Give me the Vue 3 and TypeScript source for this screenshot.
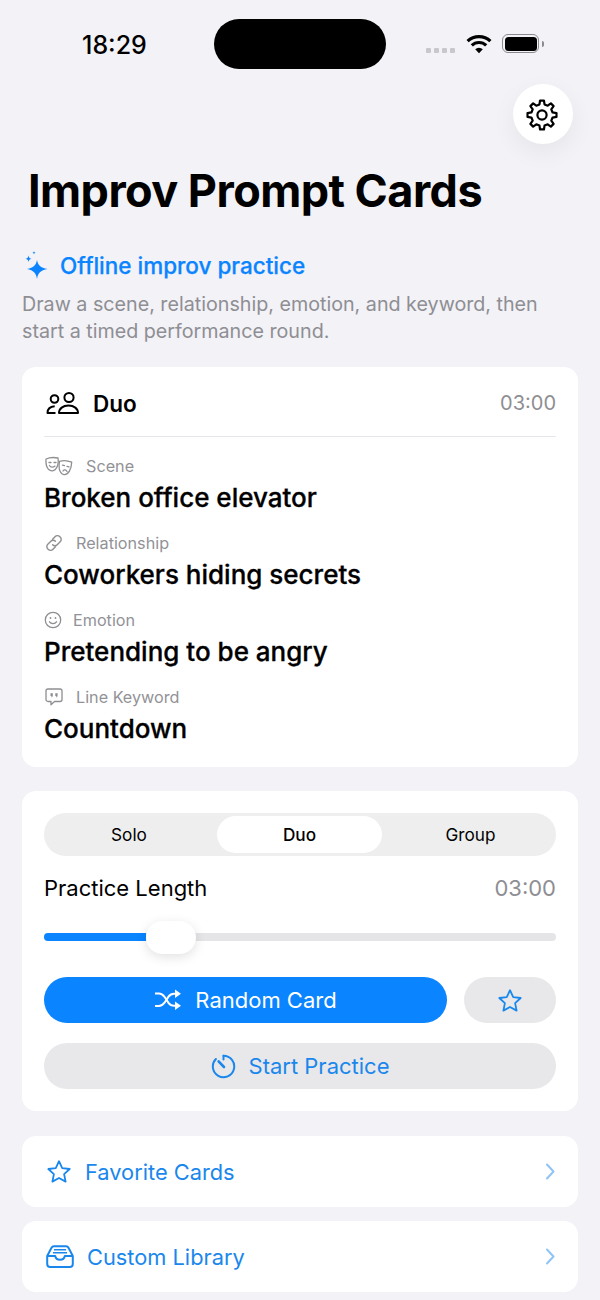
<script setup lang="ts">
// 8-tooth gear outline for the settings button
function gearPath(cx: number, cy: number, outer: number, inner: number, teeth: number): string {
  const pts: string[] = []
  const step = (Math.PI * 2) / teeth
  for (let i = 0; i < teeth; i++) {
    const a = i * step - Math.PI / 2
    const list: [number, number][] = [
      [a - step * 0.3, inner],
      [a - step * 0.17, outer],
      [a + step * 0.17, outer],
      [a + step * 0.3, inner],
    ]
    for (const [ang, r] of list) {
      pts.push(`${(cx + Math.cos(ang) * r).toFixed(2)} ${(cy + Math.sin(ang) * r).toFixed(2)}`)
    }
  }
  return 'M' + pts.join('L') + 'Z'
}

const gear = gearPath(16, 16, 14.6, 10.9, 8)
const star = 'M13 2.2l3.2 6.9 7.5.9-5.6 5.1 1.5 7.5L13 19l-6.6 3.6 1.5-7.5L2.3 10l7.5-.9z'
const modes = ['Solo', 'Duo', 'Group']
</script>

<template>
  <div class="page">
    <div class="status">
      <span class="time">18:29</span>
      <div class="island"></div>
      <div class="status-icons">
        <div class="dots"><i></i><i></i><i></i><i></i></div>
        <svg class="wifi" width="26" height="20" viewBox="0 0 26 20" fill="none" stroke="#000" stroke-width="3.2">
          <path d="M1.6 7.2a16.4 16.4 0 0 1 22.8 0" />
          <path d="M5.8 11.4a10.4 10.4 0 0 1 14.4 0" />
          <path d="M13 19.2l-3.8-3.9a5.4 5.4 0 0 1 7.6 0z" fill="#000" stroke="none" />
        </svg>
        <div class="battery"><div class="battery-fill"></div></div>
        <div class="battery-cap"></div>
      </div>
    </div>

    <div class="gear-row">
      <div class="gear-btn">
        <svg class="gear-icon" width="32" height="32" viewBox="0 0 32 32" fill="none" stroke="#000" stroke-width="2.2" stroke-linejoin="round">
          <path :d="gear" />
          <circle cx="16" cy="16" r="4.6" />
        </svg>
      </div>
    </div>

    <h1 class="title">Improv Prompt Cards</h1>

    <div class="tagline">
      <svg width="24" height="29" viewBox="0 0 24 29" fill="#0a84ff">
        <path d="M13 9c1 5.200 3.400 7.600 10.500 9-7.100 1.400-9.500 3.800-10.500 10-1-6.200-3.400-8.600-10-10 6.600-1.400 9-3.800 10-9z" />
        <path d="M4.500 4.500c.4 2.200 1 2.800 3 3.300-2 .5-2.600 1.100-3 3.200-.4-2.100-1-2.700-3-3.200 2-.5 2.600-1.100 3-3.300z" />
        <path d="M10 0c.2 1.100.5 1.400 1.600 1.700-1.100.3-1.400.6-1.600 1.700-.2-1.100-.5-1.400-1.600-1.700C9.500 1.400 9.800 1.100 10 0z" />
      </svg>
      <span>Offline improv practice</span>
    </div>
    <p class="desc">Draw a scene, relationship, emotion, and keyword, then start a timed performance round.</p>

    <section class="card prompt-card">
      <header class="prompt-head">
        <div class="prompt-mode">
          <svg width="33" height="24" viewBox="0 0 33 24" fill="none" stroke="#000" stroke-width="2" stroke-linejoin="round">
            <circle cx="8.500" cy="8" r="3.800" />
            <circle cx="23" cy="6.500" r="4.600" />
            <path d="M9.500 22H1.500c0-3.800 2.800-6.400 7.200-6.700" />
            <path d="M13 22c0-4.400 4-7.500 9.500-7.500S32 17.600 32 22z" />
          </svg>
          <span>Duo</span>
        </div>
        <span class="prompt-time">03:00</span>
      </header>

      <div class="prompt-list">
        <div class="prompt">
          <div class="label">
            <svg width="28" height="20" viewBox="0 0 28 20" fill="none" stroke="#8e8e93" stroke-width="1.300" stroke-linejoin="round" stroke-linecap="round">
              <path d="M1 3c3.500-1.600 8-1.800 12-1 .4 3 .2 6-.6 8-1 2.600-3.200 4.600-5 4.800C5 15 2.500 12.800 1.500 9.800 1 8 .9 5 1 3z" />
              <path d="M14.500 5.400c3.600-1.200 8.200-.8 12.200.8-.1 3-.9 6.600-2.300 9-1.300 2.200-3.600 3.700-5.500 3.400-2.200-.4-4-2.800-4.600-5.700-.3-2-.3-5.400.2-7.500z" fill="#fff" />
              <path d="M4 6.500h2M9 6.500h2M4.500 9.500c1.200 2 3.500 2.200 5.500.6" />
              <path d="M17.500 9.200l2 .5M22 10.400l2 .5M18 15c1-1.600 3-1.300 4 .5" />
            </svg>
            <span>Scene</span>
          </div>
          <div class="value">Broken office elevator</div>
        </div>
        <div class="prompt">
          <div class="label">
            <svg width="18" height="18" viewBox="0 0 18 18" fill="none" stroke="#8e8e93" stroke-width="1.400" stroke-linecap="round">
              <path d="M7.600 5.200l2.400-2.500a3.200 3.200 0 0 1 4.800 0l.4.400a3.200 3.200 0 0 1 0 4.600l-3 3a3.200 3.200 0 0 1-4.600 0" />
              <path d="M10.400 12.800L8 15.300a3.200 3.200 0 0 1-4.800 0l-.4-.4a3.200 3.200 0 0 1 0-4.600l3-3a3.200 3.200 0 0 1 4.600 0" />
            </svg>
            <span>Relationship</span>
          </div>
          <div class="value">Coworkers hiding secrets</div>
        </div>
        <div class="prompt">
          <div class="label tight">
            <svg width="18" height="18" viewBox="0 0 18 18" fill="none" stroke="#8e8e93" stroke-width="1.300" stroke-linecap="round">
              <circle cx="9" cy="9" r="7.700" />
              <path d="M5.500 10.800c1.600 2.300 5.400 2.300 7 0" />
              <circle cx="6.500" cy="7" r=".9" fill="#8e8e93" stroke="none" />
              <circle cx="11.500" cy="7" r=".9" fill="#8e8e93" stroke="none" />
            </svg>
            <span>Emotion</span>
          </div>
          <div class="value">Pretending to be angry</div>
        </div>
        <div class="prompt">
          <div class="label">
            <svg width="18" height="18" viewBox="0 0 18 18" fill="none" stroke="#8e8e93" stroke-width="1.300" stroke-linejoin="round">
              <path d="M3 1h12a2 2 0 0 1 2 2v8.500a2 2 0 0 1-2 2H9.500L6 16.800v-3.300H3a2 2 0 0 1-2-2V3a2 2 0 0 1 2-2z" />
              <path d="M5.500 5.200h2.300v2.200c0 1-.6 1.700-1.500 1.900l.3-1.300h-1.100zM10.300 5.200h2.300v2.200c0 1-.6 1.700-1.500 1.900l.3-1.300h-1.100z" fill="#8e8e93" stroke="none" />
            </svg>
            <span>Line Keyword</span>
          </div>
          <div class="value">Countdown</div>
        </div>
      </div>
    </section>

    <section class="card controls">
      <div class="segment">
        <div v-for="m in modes" :key="m" class="seg-item" :class="{ active: m === 'Duo' }">{{ m }}</div>
      </div>

      <div class="length-row">
        <span>Practice Length</span>
        <span class="length-time">03:00</span>
      </div>

      <div class="slider">
        <div class="track"><div class="track-fill"></div></div>
        <div class="thumb"></div>
      </div>

      <div class="btn-row">
        <div class="btn btn-primary">
          <svg width="28" height="24" viewBox="0 0 28 24" fill="none" stroke="#fff" stroke-width="2">
            <path d="M1 5.500h4c2.500 0 3.800 1 5.500 3.300l4 6c1.500 2 3 2.900 5.500 2.900h2" />
            <path d="M1 18h4c2.500 0 3.800-1 5.500-3.300l4-6C16 6.700 17.500 5.800 20 5.800h2" />
            <path d="M21 1.500l6 4.300-6 4.300zM21 13.500l6 4.300-6 4.300z" fill="#fff" stroke="none" />
          </svg>
          <span>Random Card</span>
        </div>
        <div class="btn btn-star">
          <svg width="26" height="25" viewBox="0 0 26 25" fill="none" stroke="#1a87ec" stroke-width="1.800" stroke-linejoin="round"><path :d="star" /></svg>
        </div>
      </div>

      <div class="btn btn-start">
        <svg width="25" height="25" viewBox="0 0 25 25" fill="none" stroke="#1a87ec" stroke-width="2" stroke-linecap="round">
          <path d="M12.500 1.800a10.700 10.700 0 1 1-7.600 3.200" />
          <path d="M7.600 7.400l5.400 5.600" stroke-width="2.600" />
          <path d="M12.500 1.800v3.700" />
        </svg>
        <span>Start Practice</span>
      </div>
    </section>

    <section class="card link-row first">
      <div class="link-main">
        <svg width="26" height="25" viewBox="0 0 26 25" fill="none" stroke="#1a87ec" stroke-width="1.800" stroke-linejoin="round"><path :d="star" /></svg>
        <span>Favorite Cards</span>
      </div>
      <svg width="10" height="17" viewBox="0 0 10 17" fill="none" stroke="#8fc4f5" stroke-width="2" stroke-linecap="round" stroke-linejoin="round"><path d="M2 1.500l6.500 7-6.500 7" /></svg>
    </section>

    <section class="card link-row">
      <div class="link-main">
        <svg width="28" height="23" viewBox="0 0 28 23" fill="none" stroke="#1a87ec" stroke-width="2" stroke-linejoin="round">
          <path d="M1.200 11L5.500 2.800A3 3 0 0 1 8 1.200h12a3 3 0 0 1 2.500 1.600L26.800 11v8a3 3 0 0 1-3 3H4.200a3 3 0 0 1-3-3z" />
          <path d="M1.200 11h8c.4 2.400 2.200 3.800 4.800 3.800s4.400-1.400 4.800-3.800h8" />
          <path d="M8 4.700h12M7 7.800h14" stroke-width="1.400" />
        </svg>
        <span>Custom Library</span>
      </div>
      <svg width="10" height="17" viewBox="0 0 10 17" fill="none" stroke="#8fc4f5" stroke-width="2" stroke-linecap="round" stroke-linejoin="round"><path d="M2 1.500l6.500 7-6.500 7" /></svg>
    </section>
  </div>
</template>

<style scoped>
.page {
  width: 600px;
  height: 1300px;
  overflow: hidden;
  box-sizing: border-box;
  padding: 0 22px;
  background: #f2f2f7;
  font-family: Inter, "Liberation Sans", sans-serif;
  color: #000;
}

.status {
  height: 84px;
  margin: 0 -22px;
  padding: 19px 55px 0 82px;
  box-sizing: border-box;
  display: flex;
  align-items: flex-start;
}
.time {
  width: 132px;
  line-height: 52px;
  font-size: 25px;
  font-weight: 500;
}
.island {
  width: 172px;
  height: 50px;
  border-radius: 25px;
  background: #000;
}
.status-icons {
  margin-left: 40px;
  height: 50px;
  display: flex;
  align-items: center;
}
.dots {
  display: flex;
  gap: 3px;
  margin-top: 13px;
}
.dots i {
  width: 5px;
  height: 5px;
  background: #c7c7cc;
  border-radius: 1px;
}
.wifi {
  margin-left: 11px;
  margin-top: 0;
}
.battery {
  margin-left: 10px;
  margin-top: -1px;
  width: 37px;
  height: 19px;
  box-sizing: border-box;
  border: 1.5px solid #8a8a8e;
  border-radius: 6px;
  padding: 1.5px;
}
.battery-fill {
  height: 100%;
  background: #000;
  border-radius: 3.5px;
}
.battery-cap {
  width: 2px;
  height: 6px;
  margin: -1px 0 0 3px;
  background: #8a8a8e;
  border-radius: 0 2px 2px 0;
}

.gear-row {
  display: flex;
  justify-content: flex-end;
  padding-right: 5px;
}
.gear-btn {
  width: 60px;
  height: 60px;
  border-radius: 50%;
  background: #fff;
  display: flex;
  align-items: center;
  justify-content: center;
  box-shadow: 0 8px 24px rgba(0, 0, 0, 0.06);
}
.gear-icon {
  margin: 1px 2px 0 0;
}

.title {
  margin: 20px 0 0 6px;
  font-size: 45px;
  line-height: 54px;
  font-weight: 700;
  letter-spacing: -0.55px;
  white-space: nowrap;
}
.tagline {
  margin-top: 32px;
  height: 30px;
  padding-left: 2px;
  display: flex;
  align-items: center;
  gap: 12px;
  color: #0a84ff;
  font-size: 22.5px;
  font-weight: 500;
  -webkit-text-stroke: 0.25px #0a84ff;
}
.desc {
  margin: 11px 0 0;
  font-size: 19.7px;
  line-height: 27px;
  color: #8e8e93;
}

.card {
  background: #fff;
  border-radius: 14px;
}
.prompt-card {
  margin-top: 22px;
  height: 400px;
  padding: 0 22px;
  box-sizing: border-box;
}
.prompt-head {
  height: 70px;
  box-sizing: border-box;
  padding-top: 3px;
  border-bottom: 1px solid #e5e5ea;
  display: flex;
  align-items: center;
  justify-content: space-between;
}
.prompt-mode {
  display: flex;
  align-items: center;
  gap: 14px;
  padding-left: 2px;
  font-size: 22.5px;
  font-weight: 600;
}
.prompt-time {
  color: #8e8e93;
  font-size: 20px;
}
.prompt-list {
  padding-top: 17px;
  display: flex;
  flex-direction: column;
  gap: 17px;
}
.prompt {
  height: 60px;
}
.label {
  height: 24px;
  display: flex;
  align-items: center;
  gap: 13px;
  padding-left: 1px;
  color: #929297;
  font-size: 16.2px;
}
.label.tight {
  gap: 11px;
  padding-left: 0;
}
.value {
  margin-top: 2px;
  font-size: 26px;
  line-height: 35px;
  font-weight: 500;
  -webkit-text-stroke: 0.3px #000;
  white-space: nowrap;
}

.controls {
  margin-top: 24px;
  padding: 22px;
}
.segment {
  height: 43px;
  border-radius: 22px;
  background: #eeeeef;
  display: grid;
  grid-template-columns: 170px 165px 1fr;
  gap: 3px;
}
.seg-item {
  margin: 3px 0;
  border-radius: 19px;
  display: flex;
  align-items: center;
  justify-content: center;
  font-size: 17.2px;
  font-weight: 400;
}
.seg-item.active {
  background: #fff;
  font-weight: 500;
}
.length-row {
  margin-top: 16px;
  height: 32px;
  display: flex;
  align-items: center;
  justify-content: space-between;
  font-size: 22px;
}
.length-time {
  color: #8e8e93;
}
.slider {
  position: relative;
  margin-top: 16px;
  height: 34px;
  display: flex;
  align-items: center;
}
.track {
  width: 100%;
  height: 8px;
  border-radius: 4px;
  background: #e5e5e7;
  overflow: hidden;
}
.track-fill {
  width: 102px;
  height: 100%;
  background: #0a84ff;
}
.thumb {
  position: absolute;
  left: 102px;
  top: 1px;
  width: 50px;
  height: 33px;
  border-radius: 17px;
  background: #fff;
  box-shadow: 0 3px 12px rgba(0, 0, 0, 0.12);
}
.btn-row {
  margin-top: 23px;
  display: flex;
  gap: 17px;
}
.btn {
  height: 46px;
  border-radius: 23px;
  display: flex;
  align-items: center;
  justify-content: center;
  font-size: 22px;
}
.btn-primary {
  flex: 1;
  gap: 13px;
  background: #0a84ff;
  color: #fff;
}
.btn-star {
  width: 92px;
  background: #e8e8ea;
}
.btn-start {
  margin-top: 20px;
  gap: 13px;
  background: #e8e8ea;
  color: #1a87ec;
}
.link-row {
  height: 71px;
  margin-top: 14px;
  padding: 0 23px 0 22px;
  display: flex;
  align-items: center;
  justify-content: space-between;
  color: #1a87ec;
  font-size: 21.8px;
}
.link-row.first {
  margin-top: 25px;
}
.link-main {
  display: flex;
  align-items: center;
  gap: 13px;
  padding-left: 2px;
}
</style>

<style>
html,
body {
  background: #f2f2f7;
}
</style>
